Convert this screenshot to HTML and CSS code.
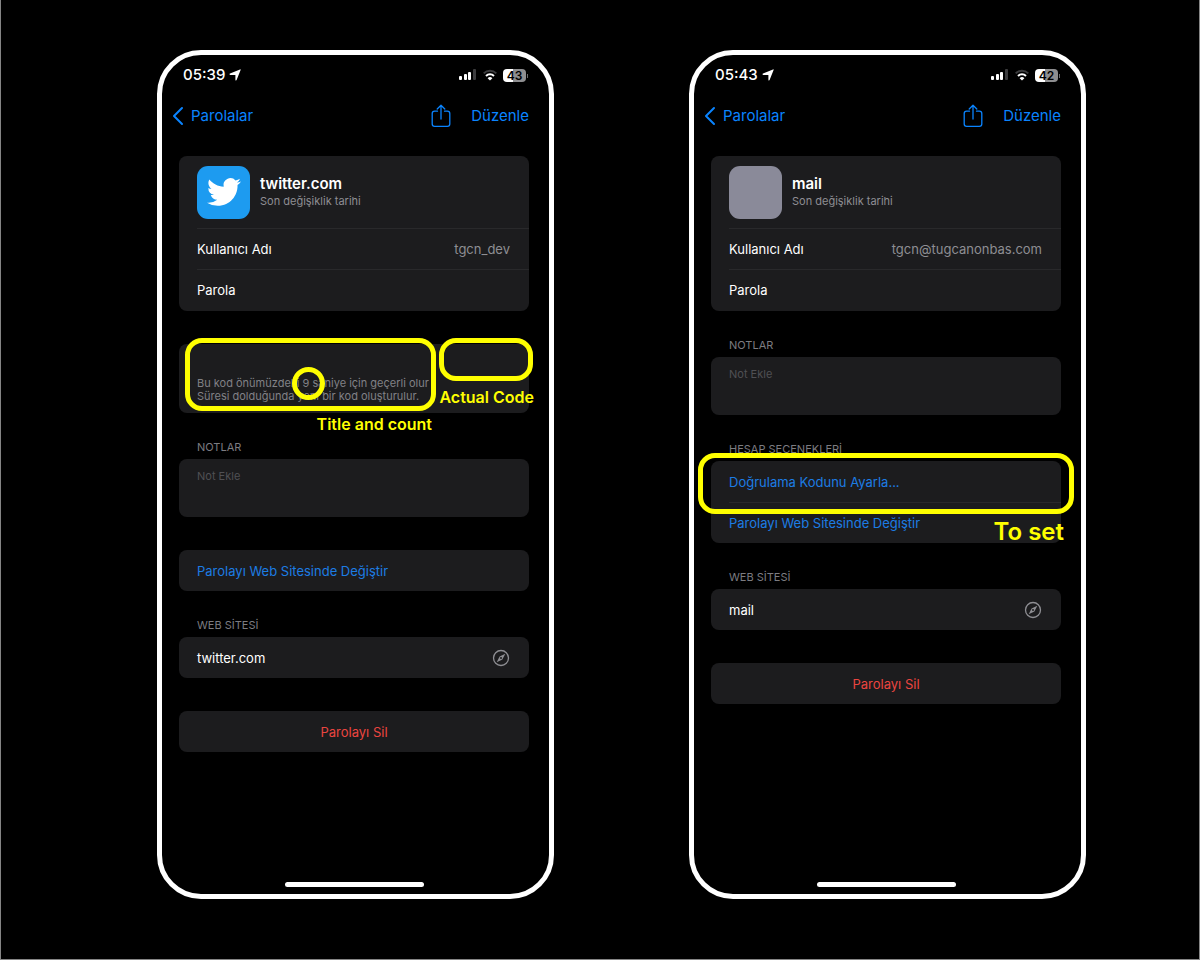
FILE: index.html
```html
<!DOCTYPE html>
<html lang="tr">
<head>
    <meta charset="UTF-8">
    <meta name="viewport" content="width=device-width, initial-scale=1.0">
    <title>Parolalar</title>
    <link rel="stylesheet" href="styles.css">
</head>
<body>
    <svg width="0" height="0" class="sprite" aria-hidden="true">
        <symbol id="location" viewBox="0 0 12 12">
            <path d="M11.6 1 7.6 11.1c-.3.7-1.200.6-1.200-.2V6H1.300C.4 6 .3 4.900 1 4.600L11 .4c.5-.2.8.1.6.6z" fill="currentColor"/>
        </symbol>
        <symbol id="signal" viewBox="0 0 18 12">
            <rect x="0" y="7" width="3" height="4" rx="1" fill="#fff"/>
            <rect x="5" y="5" width="3" height="6" rx="1" fill="#fff"/>
            <rect x="9" y="3" width="3" height="8" rx="1" fill="#fff"/>
            <rect x="14" y="0" width="3" height="11" rx="1" fill="#3c3c3e"/>
        </symbol>
        <symbol id="wifi" viewBox="0 0 16 12">
            <path d="M1.7 4.4a9 9 0 0 1 12.6 0" fill="none" stroke="#3c3c3e" stroke-width="2"/>
            <path d="M4 7a5.7 5.7 0 0 1 8 0" fill="none" stroke="#fff" stroke-width="2"/>
            <path d="M8 11.6 5.6 9.2a3.4 3.4 0 0 1 4.8 0z" fill="#fff"/>
        </symbol>
        <symbol id="chevron" viewBox="0 0 12 20">
            <path d="M10 2 2 10l8 8" fill="none" stroke="currentColor" stroke-width="2" stroke-linecap="round" stroke-linejoin="round"/>
        </symbol>
        <symbol id="share" viewBox="0 0 20 24">
            <path d="M6.5 7.2H3.6A2.4 2.4 0 0 0 1.2 9.6V20a2.4 2.4 0 0 0 2.4 2.4h12.8a2.4 2.4 0 0 0 2.4-2.400V9.6a2.4 2.4 0 0 0-2.4-2.4h-2.900M10 15V1.4M6.2 5 10 1.2 13.8 5" fill="none" stroke="currentColor" stroke-width="1.3" stroke-linecap="round" stroke-linejoin="round"/>
        </symbol>
        <symbol id="compass" viewBox="0 0 18 18">
            <circle cx="9" cy="9" r="7.5" fill="none" stroke="currentColor" stroke-width="1.3"/>
            <path d="M13.3 4.7 10.4 10.4 4.7 13.3 7.6 7.6z" fill="currentColor"/>
            <circle cx="9" cy="9" r="1" fill="#1c1c1e"/>
        </symbol>
        <symbol id="bird" viewBox="0 0 24 24">
            <path fill="#fff" d="M23.953 4.57a10 10 0 01-2.825.775 4.958 4.958 0 002.163-2.723c-.951.555-2.005.959-3.127 1.184a4.92 4.92 0 00-8.384 4.482C7.69 8.095 4.067 6.13 1.64 3.162a4.822 4.822 0 00-.666 2.475c0 1.71.87 3.213 2.188 4.096a4.904 4.904 0 01-2.228-.616v.06a4.923 4.923 0 003.946 4.827 4.996 4.996 0 01-2.212.085 4.936 4.936 0 004.604 3.417 9.867 9.867 0 01-6.102 2.105c-.39 0-.779-.023-1.17-.067a13.995 13.995 0 007.557 2.209c9.053 0 13.998-7.496 13.998-13.985 0-.21 0-.42-.015-.63A9.935 9.935 0 0024 4.59z"/>
        </symbol>
    </svg>

    <main class="stage">
        <section class="phone">
            <div class="status">
                <span class="time">05:39</span>
                <svg class="location"><use href="#location"/></svg>
                <svg class="signal"><use href="#signal"/></svg>
                <svg class="wifi"><use href="#wifi"/></svg>
                <span class="battery">43</span>
            </div>
            <nav class="nav">
                <a class="back" href="#"><svg><use href="#chevron"/></svg>Parolalar</a>
                <button class="share" type="button" aria-label="Paylaş"><svg><use href="#share"/></svg></button>
                <button class="edit" type="button">Düzenle</button>
            </nav>

            <div class="card summary">
                <div class="head">
                    <div class="logo twitter"><svg><use href="#bird"/></svg></div>
                    <div>
                        <h1>twitter.com</h1>
                        <p>Son değişiklik tarihi</p>
                    </div>
                </div>
                <div class="row"><span>Kullanıcı Adı</span><span class="value">tgcn_dev</span></div>
                <div class="row"><span>Parola</span></div>
            </div>

            <div class="card code">
                <p>Bu kod önümüzdeki 9 saniye için geçerli olur<br>Süresi dolduğunda yeni bir kod oluşturulur.</p>
                <div class="mark mark-title"></div>
                <div class="mark mark-count"></div>
                <div class="mark mark-code"></div>
                <span class="note note-code">Actual Code</span>
                <span class="note note-title">Title and count</span>
            </div>

            <label class="label" for="notes-1">NOTLAR</label>
            <textarea class="card notes" id="notes-1" placeholder="Not Ekle"></textarea>

            <div class="card">
                <a class="row link" href="#">Parolayı Web Sitesinde Değiştir</a>
            </div>

            <h2 class="label">WEB SİTESİ</h2>
            <div class="card">
                <div class="row"><span>twitter.com</span><a class="open" href="#" aria-label="Web sitesini aç"><svg><use href="#compass"/></svg></a></div>
            </div>

            <button class="card delete" type="button">Parolayı Sil</button>
            <div class="home"></div>
        </section>

        <section class="phone">
            <div class="status">
                <span class="time">05:43</span>
                <svg class="location"><use href="#location"/></svg>
                <svg class="signal"><use href="#signal"/></svg>
                <svg class="wifi"><use href="#wifi"/></svg>
                <span class="battery">42</span>
            </div>
            <nav class="nav">
                <a class="back" href="#"><svg><use href="#chevron"/></svg>Parolalar</a>
                <button class="share" type="button" aria-label="Paylaş"><svg><use href="#share"/></svg></button>
                <button class="edit" type="button">Düzenle</button>
            </nav>

            <div class="card summary">
                <div class="head">
                    <div class="logo"></div>
                    <div>
                        <h1>mail</h1>
                        <p>Son değişiklik tarihi</p>
                    </div>
                </div>
                <div class="row"><span>Kullanıcı Adı</span><span class="value">tgcn@tugcanonbas.com</span></div>
                <div class="row"><span>Parola</span></div>
            </div>

            <label class="label" for="notes-2">NOTLAR</label>
            <textarea class="card notes" id="notes-2" placeholder="Not Ekle"></textarea>

            <h2 class="label">HESAP SEÇENEKLERİ</h2>
            <div class="card">
                <a class="row link" href="#">Doğrulama Kodunu Ayarla...</a>
                <a class="row link" href="#">Parolayı Web Sitesinde Değiştir</a>
                <div class="mark mark-set"></div>
                <span class="note note-set">To set</span>
            </div>

            <h2 class="label">WEB SİTESİ</h2>
            <div class="card">
                <div class="row"><span>mail</span><a class="open" href="#" aria-label="Web sitesini aç"><svg><use href="#compass"/></svg></a></div>
            </div>

            <button class="card delete" type="button">Parolayı Sil</button>
            <div class="home"></div>
        </section>
    </main>
</body>
</html>
```
FILE: styles.css
```css
* {
    box-sizing: border-box;
    margin: 0;
}
body {
    background-color: #000;
    color: #fff;
    font-family: Inter, "Liberation Sans", sans-serif;
    font-size: 13px;
    line-height: 16px;
}
a {
    color: inherit;
    text-decoration: none;
}
button {
    padding: 0;
    border: 0;
    background: none;
    color: inherit;
    font: inherit;
}
svg {
    display: block;
}
.sprite {
    position: absolute;
}
.stage {
    display: grid;
    grid-template-columns: 1fr 1fr;
    gap: 135px;
    min-height: 100vh;
    padding: 50px 113px 60px 156px;
    border: 1px solid #858585;
    border-top: 0;
}
.phone {
    display: flex;
    flex-direction: column;
    padding: 12px 20px 7px 17px;
    border: 5px solid #fff;
    border-radius: 44px;
}

/* status bar */
.status {
    display: flex;
    align-items: center;
    height: 16px;
    padding: 0 3px 0 4px;
}
.time {
    font-size: 15px;
    font-weight: 500;
}
.location {
    width: 12px;
    height: 12px;
    margin-left: 4px;
}
.signal {
    width: 18px;
    height: 12px;
    margin-left: auto;
}
.wifi {
    width: 16px;
    height: 12px;
    margin: 0 5px;
}
.battery {
    position: relative;
    width: 23px;
    height: 13px;
    border-radius: 4px;
    background: linear-gradient(90deg, #fff 43%, #8e8e90 43%);
    color: #000;
    font-size: 12px;
    font-weight: 600;
    line-height: 13px;
    text-align: center;
}
.battery::after {
    content: "";
    position: absolute;
    top: 5px;
    right: -2px;
    width: 1px;
    height: 4px;
    background-color: #6a6a6c;
}

/* navigation */
.nav {
    display: flex;
    align-items: center;
    height: 30px;
    margin: 18px 0 25px -7px;
    color: #0a84ff;
    font-size: 15px;
}
.back {
    display: flex;
    align-items: center;
    gap: 7px;
    margin-right: auto;
}
.back svg {
    width: 12px;
    height: 20px;
}
.share {
    margin-right: 20px;
}
.share svg {
    width: 20px;
    height: 24px;
}

/* cards */
.card {
    position: relative;
    border-radius: 8px;
    background-color: #1c1c1e;
}
.card + .card {
    margin-top: 33px;
}
.summary {
    padding-bottom: 1px;
}
.head {
    display: flex;
    align-items: center;
    gap: 10px;
    height: 72px;
    padding-left: 18px;
}
.head h1 {
    font-size: 15px;
    font-weight: 600;
    line-height: 18px;
}
.head p {
    color: #8e8e93;
    font-size: 11px;
}
.logo {
    display: grid;
    place-items: center;
    width: 53px;
    height: 53px;
    border-radius: 11px;
    background-color: #8a8a99;
}
.twitter {
    background-color: #1d9bf0;
}
.logo svg {
    width: 34px;
    height: 34px;
}
.row {
    display: flex;
    align-items: center;
    justify-content: space-between;
    height: 41px;
    margin-left: 18px;
    padding-right: 19px;
}
.head + .row, .row + .row {
    border-top: 1px solid #29292b;
}
.value, .open {
    color: #8e8e93;
}
.open svg {
    width: 18px;
    height: 18px;
}
.link {
    color: #1c7ce4;
}
.label {
    margin: 27px 0 5px 18px;
    color: #7c7c81;
    font-size: 11px;
    font-weight: 400;
    line-height: 14px;
}
.notes {
    height: 58px;
    padding: 10px 18px;
    border: 0;
    outline: 0;
    color: #fff;
    font: 11px/14px Inter, "Liberation Sans", sans-serif;
    resize: none;
}
.notes::placeholder {
    color: #505054;
}
.delete {
    height: 41px;
    color: #eb4540;
}
.code {
    height: 69px;
    padding: 33px 18px 0;
    color: #818186;
    font-size: 11px;
    line-height: 13px;
    white-space: nowrap;
}
.home {
    align-self: center;
    width: 139px;
    height: 5px;
    margin-top: auto;
    border-radius: 3px;
    background-color: #fff;
}

/* yellow annotations over the cards */
.mark {
    position: absolute;
    border: 5px solid #ff0;
    border-radius: 17px;
}
.mark-title {
    top: -6px;
    left: 6px;
    width: 251px;
    height: 73px;
}
.mark-count {
    top: 23px;
    left: 113px;
    width: 33px;
    height: 33px;
}
.mark-code {
    top: -6px;
    right: -4px;
    width: 94px;
    height: 43px;
}
.mark-set {
    top: -8px;
    left: -13px;
    right: -13px;
    height: 61px;
}
.note {
    position: absolute;
    color: #ff0;
    font-size: 16px;
    font-weight: 600;
    line-height: 18px;
    white-space: nowrap;
}
.note-code {
    top: 44px;
    right: -5px;
}
.note-title {
    top: 71px;
    right: 97px;
}
.note-set {
    top: 56px;
    right: -3px;
    font-size: 24px;
    line-height: 30px;
}
```
